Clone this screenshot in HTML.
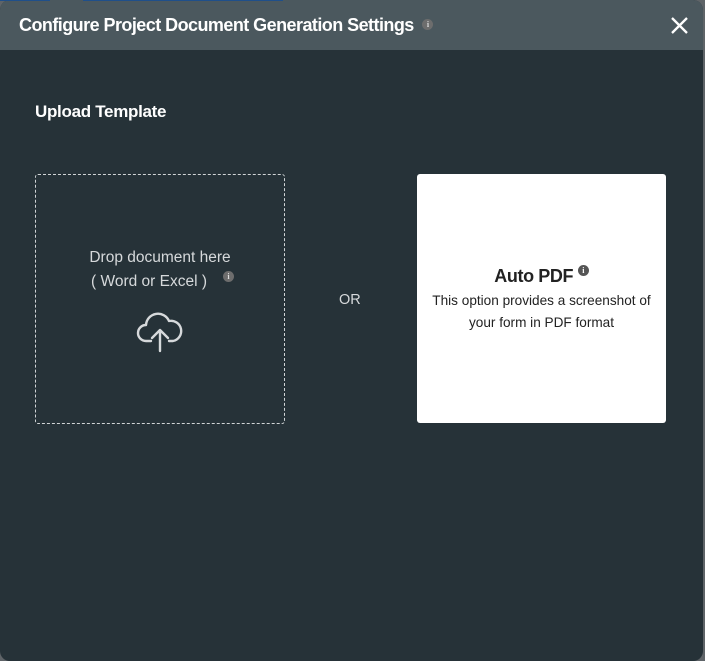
<!DOCTYPE html>
<html><head><style>
html,body{margin:0;padding:0;width:705px;height:661px;background:#5f6468;overflow:hidden;font-family:"Liberation Sans",sans-serif}
.modal{position:absolute;left:0;top:0;width:703px;height:661px;background:#263238;border-radius:10px;overflow:hidden}
.hdr{position:absolute;left:0;top:0;width:703px;height:50px;background:#4b585e}
.title{position:absolute;left:19px;top:15px;color:#fff;font-size:18px;font-weight:bold;letter-spacing:-0.55px}
.info{display:inline-block;width:11px;height:11px;border-radius:50%;background:#6d6d6d;color:#ddd;font-size:8px;line-height:11px;text-align:center;font-family:"Liberation Serif",serif;font-weight:bold;vertical-align:middle}
.blue{position:absolute;top:0;height:1px;background:#1f4f8a}
.up{position:absolute;left:35px;top:102px;color:#fff;font-size:17px;font-weight:bold;letter-spacing:-0.3px}
.drop{position:absolute;left:35px;top:174px;width:248px;height:248px;border:1px dashed #d0d4d6;border-radius:3px}
.dt{position:absolute;left:0;width:248px;text-align:center;color:#d6d9db;font-size:15.5px}
.or{position:absolute;left:339px;top:292px;color:#d6d9db;font-size:14.5px}
.pdf{position:absolute;left:417px;top:174px;width:249px;height:249px;background:#fff;border-radius:3px}
.pt{position:absolute;left:0;width:249px;text-align:center;color:#222}
</style></head><body>
<div class="modal">
<div class="hdr">
<div class="title">Configure Project Document Generation Settings <span class="info" style="margin-left:4px;margin-top:-3px">i</span></div>
<svg style="position:absolute;left:670px;top:16px" width="19" height="19" viewBox="0 0 19 19"><path d="M2 2L17 17M17 2L2 17" stroke="#fff" stroke-width="2.3"/></svg>
</div>
<div class="up">Upload Template</div>
<div class="drop">
<div class="dt" style="top:74px">Drop document here</div>
<div class="dt" style="top:98px;left:-11px">( Word or Excel )</div>
<span class="info" style="position:absolute;left:187px;top:96px">i</span>
<svg style="position:absolute;left:100px;top:136px" width="48" height="42" viewBox="0 0 48 42"><path d="M15 30H10A8 8 0 0 1 10 14A12 12 0 0 1 33 10A10 10 0 0 1 37 30H33" fill="none" stroke="#d6d9db" stroke-width="2.4" stroke-linecap="round" stroke-linejoin="round"/><path d="M24 40V20M16 27L24 19L32 27" fill="none" stroke="#d6d9db" stroke-width="2.4" stroke-linecap="round" stroke-linejoin="round"/></svg>
</div>
<div class="or">OR</div>
<div class="pdf">
<div class="pt" style="top:92px;font-size:18px;font-weight:bold;letter-spacing:-0.4px">Auto PDF <span class="info" style="background:#555;color:#fff;vertical-align:top;margin-top:-1px">i</span></div>
<div class="pt" style="top:119px;font-size:13.6px">This option provides a screenshot of</div>
<div class="pt" style="top:141px;font-size:13.6px">your form in PDF format</div>
</div>
</div>
<div class="blue" style="left:0;width:50px"></div>
<div class="blue" style="left:83px;width:200px"></div>
</body></html>
